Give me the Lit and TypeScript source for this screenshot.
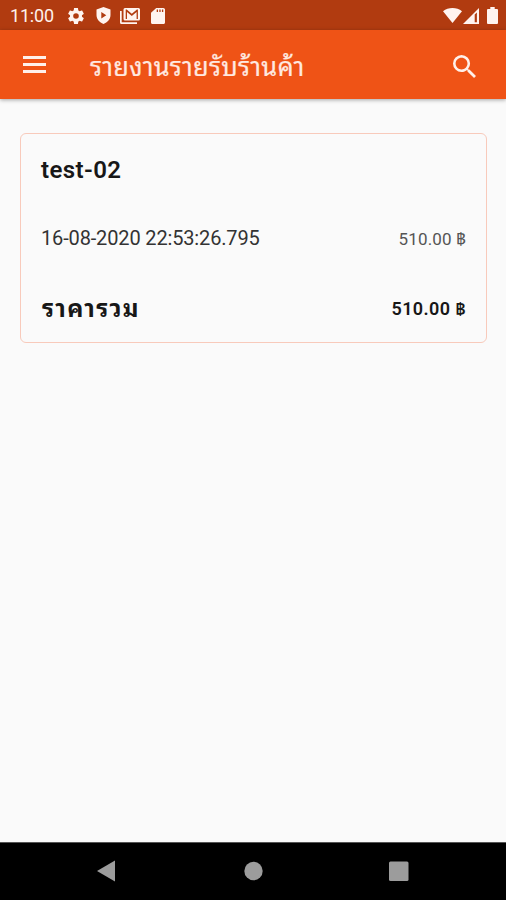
import { LitElement, html, css, svg } from "lit";
import { customElement } from "lit/decorators.js";

const icon = (cls: string, viewBox: string, body: unknown) =>
  html`<svg class=${cls} viewBox=${viewBox} preserveAspectRatio="none" aria-hidden="true">${body}</svg>`;

@customElement("status-bar")
class StatusBar extends LitElement {
  static styles = css`
    :host { display: flex; align-items: center; height: 30px; box-sizing: border-box; background: #b13b10; color: #fff1ec; padding: 1px 8px 0 10px; font: 18px Roboto, sans-serif; }
    svg { display: block; flex: none; fill: #fff4f0; }
    .time { width: 58px; white-space: nowrap; line-height: 28px; letter-spacing: -.2px; padding-top: 1px; }
    .gear { width: 16px; height: 16px; }
    .shield { width: 15px; height: 17px; margin-left: 12px; }
    .mail { width: 20px; height: 16px; margin-left: 9px; }
    .card { width: 14px; height: 16px; margin-left: 11px; }
    .wifi { width: 19px; height: 15px; margin-left: auto; }
    .signal { width: 16px; height: 16px; margin-left: 1px; }
    .battery { width: 11px; height: 17px; margin-left: 8px; }
  `;
  render() {
    return html`
      <span class="time">11:00</span>
      ${icon("gear", "2 2 20 20", svg`<path d="M19.43 12.98c.04-.32.07-.64.07-.98s-.03-.66-.07-.98l2.11-1.65c.19-.15.24-.42.12-.64l-2-3.46c-.12-.22-.39-.3-.61-.22l-2.49 1c-.52-.4-1.08-.73-1.69-.98l-.38-2.65C14.46 2.18 14.25 2 14 2h-4c-.25 0-.46.18-.49.42l-.38 2.65c-.61.25-1.17.59-1.69.98l-2.49-1c-.23-.09-.49 0-.61.22l-2 3.46c-.13.22-.07.49.12.64l2.11 1.65c-.04.32-.07.65-.07.98s.03.66.07.98l-2.11 1.65c-.19.15-.24.42-.12.64l2 3.46c.12.22.39.3.61.22l2.49-1c.52.4 1.08.73 1.69.98l.38 2.65c.03.24.24.42.49.42h4c.25 0 .46-.18.49-.42l.38-2.65c.61-.25 1.17-.59 1.69-.98l2.49 1c.23.09.49 0 .61-.22l2-3.46c.12-.22.07-.49-.12-.64zM12 15.5a3.5 3.5 0 1 1 0-7 3.5 3.5 0 0 1 0 7z"/>`)}
      ${icon("shield", "0 0 15 17", svg`<path fill-rule="evenodd" d="M7.5 0 14.5 2.5V8c0 4-3 7.5-7 9-4-1.500-7-5-7-9V2.500zM5.300 5v6.600l5-3.300z"/>`)}
      ${icon("mail", "0 0 20 16", svg`<path fill-rule="evenodd" d="M5 0h13.500Q20 0 20 1.500v9.500Q20 12.500 18.500 12.500H5Q3.500 12.500 3.500 11V1.500Q3.500 0 5 0zM5.700 1.500v9.400h1.300V4l4.800 4 4.800-4v6.900h1.300V1.500h-1l-5.100 4.300-5.100-4.300z"/><path d="M0 3h1.700v11.300H17V16H1.500Q0 16 0 14.500z"/>`)}
      ${icon("card", "4 2 16 20", svg`<path d="M18 2h-8L4.020 8 4 20c0 1.100.9 2 2 2h12c1.100 0 2-.9 2-2V4c0-1.100-.9-2-2-2zm-6 5h-1.500V4H12zm3 0h-1.500V4H15zm3 0h-1.500V4H18z"/>`)}
      ${icon("wifi", "0 0 19 15", svg`<path d="M0 3.200C5.300-1 13.700-1 19 3.200L9.500 15z"/>`)}
      ${icon("signal", "0 0 16 16", svg`<path fill-rule="evenodd" d="M0 16 16 0v16zM11.700 6.600v7.600h2.200V4.500z"/>`)}
      ${icon("battery", "0 0 11 17", svg`<path d="M3.300 0h4.400v2H10q1 0 1 1v13q0 1-1 1H1q-1 0-1-1V3q0-1 1-1h2.300z"/>`)}
    `;
  }
}

@customElement("app-bar")
class AppBar extends LitElement {
  static styles = css`
    :host { display: flex; align-items: center; height: 69px; box-sizing: border-box; padding: 4px 30px 0 23px; background: #ef5316; color: #ffe9e0; box-shadow: 0 1px 4px rgba(0, 0, 0, .35); }
    svg { display: block; flex: none; fill: #fff0ea; }
    .menu { width: 23px; height: 17px; margin-bottom: 4px; }
    .title { margin: 0 auto 0 44px; font: 25.500px/40px Roboto, "Noto Sans Thai Looped", Loma, Waree, Garuda, "Noto Sans Thai", sans-serif; letter-spacing: .25px; -webkit-text-stroke: .2px; white-space: nowrap; }
    .search { width: 23px; height: 23px; }
  `;
  render() {
    return html`
      ${icon("menu", "0 0 23 17", svg`<path d="M0 0h23v3H0zM0 7h23v3H0zM0 14h23v3H0z"/>`)}
      <span class="title">รายงานรายรับร้านค้า</span>
      ${icon("search", "3 3 17.490 17.490", svg`<path d="M15.500 14h-.79l-.28-.27A6.471 6.471 0 0 0 16 9.500 6.500 6.500 0 1 0 9.500 16c1.610 0 3.090-.59 4.230-1.570l.27.280v.790l5 4.990L20.490 19zm-6 0C7.010 14 5 11.990 5 9.500S7.010 5 9.500 5 14 7.010 14 9.500 11.990 14 9.500 14z"/>`)}
    `;
  }
}

@customElement("nav-bar")
class NavBar extends LitElement {
  static styles = css`
    :host { display: flex; justify-content: space-between; align-items: center; height: 58px; box-sizing: border-box; padding: 0 97px 2px 97px; background: #000; border-top: 1px solid #555; }
    svg { display: block; width: 20px; height: 22px; fill: #9c9c9c; }
  `;
  render() {
    return html`
      ${icon("back", "0 0 20 22", svg`<path d="M0 11 18 .5v21z"/>`)}
      ${icon("home", "0 0 20 22", svg`<circle cx="10.500" cy="11" r="9.200"/>`)}
      ${icon("recent", "0 0 20 22", svg`<rect x="0" y="1.500" width="19.500" height="19.500" rx="1.500"/>`)}
    `;
  }
}

@customElement("app-root")
class AppRoot extends LitElement {
  static styles = css`
    :host { display: flex; flex-direction: column; height: 900px; background: #fafafa; color: #171717; font-family: Roboto, "Noto Sans Thai Looped", Loma, Waree, Garuda, "Noto Sans Thai", sans-serif; }
    app-bar { z-index: 1; }
    main { flex: 1; padding: 34px 19px 0 20px; }
    .card { height: 210px; box-sizing: border-box; border: 1.500px solid #f8cabb; border-radius: 6px; padding: 0 20px; display: grid; grid-template-rows: 72px 64px 77px; align-items: center; }
    .row { display: flex; justify-content: space-between; align-items: center; white-space: nowrap; line-height: 30px; }
    .name { font-size: 24px; font-weight: 600; letter-spacing: .4px; }
    .date { font-size: 20px; color: #333; letter-spacing: -.15px; }
    .amount { font-size: 17px; color: #555; letter-spacing: .15px; padding-top: 2px; }
    .label { font-size: 24px; font-weight: 700; letter-spacing: 1.300px; padding-left: 1px; }
    .total { font-size: 18px; font-weight: 600; letter-spacing: .4px; }
  `;
  render() {
    return html`
      <status-bar></status-bar>
      <app-bar></app-bar>
      <main>
        <section class="card">
          <div class="row"><span class="name">test-02</span></div>
          <div class="row"><span class="date">16-08-2020 22:53:26.795</span><span class="amount">510.00 ฿</span></div>
          <div class="row"><span class="label">ราคารวม</span><span class="total">510.00 ฿</span></div>
        </section>
      </main>
      <nav-bar></nav-bar>
    `;
  }
}
